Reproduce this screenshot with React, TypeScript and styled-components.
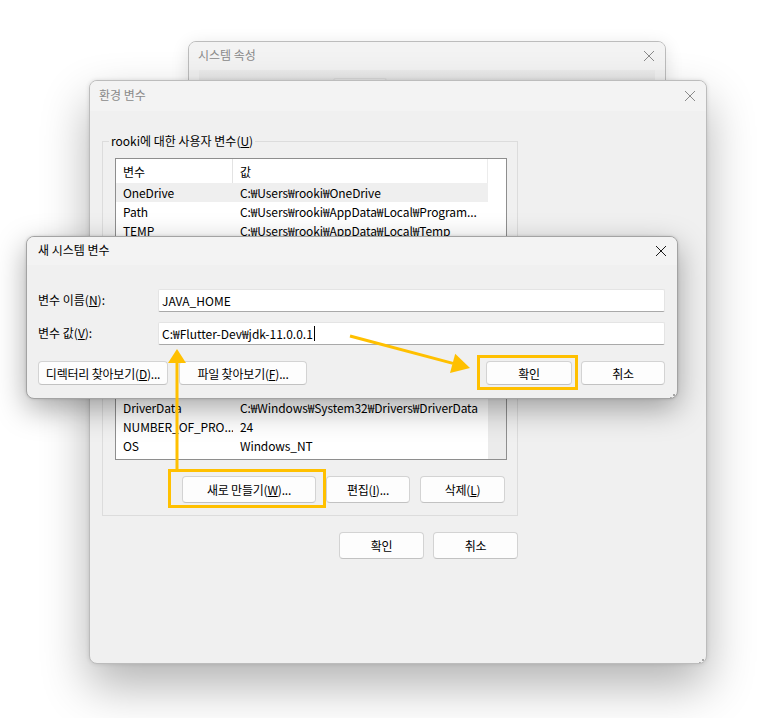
import styled, { createGlobalStyle } from "styled-components";

const GlobalStyle = createGlobalStyle`
  html, body {
    margin: 0;
    padding: 0;
    background: #ffffff;
  }
  body {
    font-family: "Noto Sans CJK KR", "Noto Sans", sans-serif;
    font-size: 12px;
    color: #000;
  }
`;

const Desktop = styled.div`
  position: relative;
  width: 778px;
  height: 718px;
  overflow: hidden;
  background: #fff;
`;

type Rect = { $x: number; $y: number; $w: number; $h: number };

const Window = styled.div<Rect & { $active?: boolean }>`
  position: absolute;
  left: ${(p) => p.$x}px;
  top: ${(p) => p.$y}px;
  width: ${(p) => p.$w}px;
  height: ${(p) => p.$h}px;
  box-sizing: border-box;
  display: flex;
  flex-direction: column;
  background: #f0f0f0;
  border: 1px solid ${(p) => (p.$active ? "#a3a3a3" : "#bcbcbc")};
  border-radius: 8px;
  overflow: hidden;
`;

const BackWindow = styled(Window)`
  box-shadow: 0 4px 18px rgba(0, 0, 0, 0.12);
`;

const EnvWindow = styled(Window)`
  box-shadow: 0 22px 48px rgba(0, 0, 0, 0.3), 0 0 4px rgba(0, 0, 0, 0.12);
`;

const DialogWindow = styled(Window)`
  box-shadow: 0 10px 30px rgba(0, 0, 0, 0.34), 0 0 3px rgba(0, 0, 0, 0.15);
`;

const TitleBar = styled.div<{ $active?: boolean; $h: number; $pl: number }>`
  flex: none;
  height: ${(p) => p.$h}px;
  box-sizing: border-box;
  display: flex;
  align-items: center;
  justify-content: space-between;
  padding: 0 10px 3px ${(p) => p.$pl}px;
  background: #f3f3f3;
  color: ${(p) => (p.$active ? "#000" : "#8a8a8a")};
  font-size: 12px;

  svg {
    margin-top: 3px;
  }
`;

const CloseIcon = ({ color }: { color: string }) => (
  <svg width="12" height="12" viewBox="0 0 12 12">
    <path d="M1 1 L11 11 M11 1 L1 11" stroke={color} strokeWidth="1" fill="none" />
  </svg>
);

const TabStrip = styled.div`
  flex: none;
  height: 12px;
  margin: 0 10px;
  background: linear-gradient(#ececec, #e4e4e4);
  display: flex;
  align-items: flex-end;
  padding-left: 134px;
`;

const Tab = styled.div`
  width: 52px;
  height: 3px;
  background: #e8e8e8;
  border: 1px solid #dadada;
  border-bottom: none;
  border-radius: 3px 3px 0 0;
`;

const EnvBody = styled.div`
  padding: 22px 12px 0 12px;
  display: flex;
  flex-direction: column;
  align-items: flex-start;
`;

const GroupBox = styled.fieldset<{ $mt?: number }>`
  margin: ${(p) => p.$mt ?? 0}px 0 0 0;
  width: 416px;
  box-sizing: border-box;
  padding: 9px 10px 12px 12px;
  border: 1px solid #dcdcdc;
  min-inline-size: 0;
`;

const Legend = styled.legend`
  margin-left: -6px;
  padding: 0 2px;
  line-height: 16px;
  font-size: 12px;
  color: #000;
`;

const ListView = styled.div<{ $h: number }>`
  height: ${(p) => p.$h}px;
  box-sizing: border-box;
  border: 1px solid #8e8e8e;
  background: #fff;
  display: flex;
  overflow: hidden;
`;

const Rows = styled.div`
  width: 372px;
  flex: none;
  display: flex;
  flex-direction: column;
`;

const Track = styled.div<{ $bg: string }>`
  flex: 1;
  background: ${(p) => p.$bg};
`;

const HeaderRow = styled.div`
  flex: none;
  height: 24px;
  display: grid;
  grid-template-columns: 117px 1fr;
  border-right: 1px solid #ececec;
`;

const HeaderCell = styled.div<{ $sep?: boolean }>`
  display: flex;
  align-items: center;
  padding-left: 7px;
  border-right: ${(p) => (p.$sep ? "1px solid #e3e3e3" : "none")};
`;

const Row = styled.div<{ $selected?: boolean }>`
  flex: none;
  height: 19px;
  display: grid;
  grid-template-columns: 117px 1fr;
  align-items: center;
  background: ${(p) => (p.$selected ? "#efefef" : "transparent")};
`;

const Cell = styled.div`
  padding: 0 4px 0 7px;
  white-space: nowrap;
  overflow: hidden;
  line-height: 19px;
  letter-spacing: -0.1px;
`;

const ButtonRow = styled.div<{ $mt: number; $gap: number }>`
  margin-top: ${(p) => p.$mt}px;
  display: flex;
  justify-content: flex-end;
  gap: ${(p) => p.$gap}px;
  padding-right: 2px;
`;

const Button = styled.div<{ $w: number; $h: number }>`
  width: ${(p) => p.$w}px;
  height: ${(p) => p.$h}px;
  box-sizing: border-box;
  display: flex;
  align-items: center;
  justify-content: center;
  background: #fdfdfd;
  border: 1px solid #d3d3d3;
  border-bottom-color: #c2c2c2;
  border-radius: 4px;
  font-size: 12px;
  color: #000;
  white-space: nowrap;
  letter-spacing: -0.2px;
`;

const Footer = styled.div`
  width: 416px;
  margin-top: 16px;
  display: flex;
  justify-content: flex-end;
  gap: 9px;
`;

const DialogBody = styled.div`
  padding: 24px 12px 13px 11px;
  display: flex;
  flex-direction: column;
`;

const FieldRow = styled.div<{ $mt: number }>`
  margin-top: ${(p) => p.$mt}px;
  display: flex;
  align-items: center;
`;

const FieldLabel = styled.div`
  width: 120px;
  flex: none;
  padding-bottom: 2px;
`;

const TextBox = styled.div`
  flex: 1;
  height: 23px;
  box-sizing: border-box;
  display: flex;
  align-items: center;
  padding: 0 0 1px 3px;
  background: #fff;
  border: 1px solid #e4e4e4;
  border-bottom-color: #a9a9a9;
  border-radius: 2px;
  white-space: nowrap;
`;

const Caret = styled.span`
  display: inline-block;
  width: 1px;
  height: 15px;
  margin-left: 1px;
  background: #000;
`;

const DialogButtons = styled.div`
  margin-top: 16px;
  display: flex;
  align-items: center;
`;

const ButtonGroup = styled.div<{ $gap: number }>`
  display: flex;
  gap: ${(p) => p.$gap}px;
`;

const Spacer = styled.div`
  flex: 1;
`;

const Grip = styled.div`
  position: absolute;
  right: 2px;
  bottom: 2px;
  width: 8px;
  height: 8px;
`;

const GripDots = () => (
  <Grip>
    <svg width="8" height="8" viewBox="0 0 8 8">
      {[
        [6, 0],
        [3, 3],
        [6, 3],
        [0, 6],
        [3, 6],
        [6, 6],
      ].map(([x, y]) => (
        <rect key={`${x}-${y}`} x={x} y={y} width="2" height="2" fill="#a6a6a6" />
      ))}
    </svg>
  </Grip>
);

const Highlight = styled.div<Rect>`
  position: absolute;
  left: ${(p) => p.$x}px;
  top: ${(p) => p.$y}px;
  width: ${(p) => p.$w}px;
  height: ${(p) => p.$h}px;
  box-sizing: border-box;
  border: 3px solid #ffc000;
  pointer-events: none;
`;

const Overlay = styled.svg`
  position: absolute;
  left: 0;
  top: 0;
  pointer-events: none;
`;

const userVars = [
  { name: "OneDrive", value: "C:₩Users₩rooki₩OneDrive", selected: true },
  { name: "Path", value: "C:₩Users₩rooki₩AppData₩Local₩Program..." },
  { name: "TEMP", value: "C:₩Users₩rooki₩AppData₩Local₩Temp" },
  { name: "TMP", value: "C:₩Users₩rooki₩AppData₩Local₩Temp" },
];

const systemVars = [
  { name: "ChocolateyInstall", value: "C:₩ProgramData₩chocolatey" },
  { name: "ComSpec", value: "C:₩Windows₩system32₩cmd.exe" },
  { name: "DriverData", value: "C:₩Windows₩System32₩Drivers₩DriverData" },
  { name: "NUMBER_OF_PRO...", value: "24" },
  { name: "OS", value: "Windows_NT" },
  { name: "Path", value: "C:₩Program Files₩Common Files₩Oracle₩Java₩javapath;C:₩Windows" },
];

type Var = { name: string; value: string; selected?: boolean };

function VarList({ items, height, track }: { items: Var[]; height: number; track: string }) {
  return (
    <ListView $h={height}>
      <Rows>
        <HeaderRow>
          <HeaderCell $sep>변수</HeaderCell>
          <HeaderCell>값</HeaderCell>
        </HeaderRow>
        {items.map((v) => (
          <Row key={v.name} $selected={v.selected}>
            <Cell>{v.name}</Cell>
            <Cell>{v.value}</Cell>
          </Row>
        ))}
      </Rows>
      <Track $bg={track} />
    </ListView>
  );
}

export default function App() {
  return (
    <>
      <GlobalStyle />
      <Desktop>
        <BackWindow $x={188} $y={41} $w={478} $h={220}>
          <TitleBar $h={28} $pl={9}>
            <span>시스템 속성</span>
            <CloseIcon color="#8a8a8a" />
          </TitleBar>
          <TabStrip>
            <Tab />
          </TabStrip>
        </BackWindow>

        <EnvWindow $x={89} $y={80} $w={618} $h={584}>
          <TitleBar $h={30} $pl={9}>
            <span>환경 변수</span>
            <CloseIcon color="#8a8a8a" />
          </TitleBar>
          <EnvBody>
            <GroupBox>
              <Legend>
                rooki에 대한 사용자 변수(<u>U</u>)
              </Legend>
              <VarList items={userVars} height={90} track="#fff" />
              <ButtonRow $mt={12} $gap={10}>
                <Button $w={134} $h={27}>새로 만들기(N)...</Button>
                <Button $w={84} $h={27}>편집(E)...</Button>
                <Button $w={85} $h={27}>삭제(D)</Button>
              </ButtonRow>
            </GroupBox>
            <GroupBox $mt={10}>
              <Legend>
                시스템 변수(<u>S</u>)
              </Legend>
              <VarList items={systemVars} height={125} track="#ebebeb" />
              <ButtonRow $mt={16} $gap={10}>
                <Button $w={134} $h={27}>
                  새로 만들기(<u>W</u>)...
                </Button>
                <Button $w={84} $h={27}>
                  편집(<u>I</u>)...
                </Button>
                <Button $w={85} $h={27}>
                  삭제(<u>L</u>)
                </Button>
              </ButtonRow>
            </GroupBox>
            <Footer>
              <Button $w={85} $h={27}>확인</Button>
              <Button $w={85} $h={27}>취소</Button>
            </Footer>
          </EnvBody>
          <GripDots />
        </EnvWindow>

        <DialogWindow $x={26} $y={236} $w={652} $h={163} $active>
          <TitleBar $h={28} $pl={11} $active>
            <span>새 시스템 변수</span>
            <CloseIcon color="#1a1a1a" />
          </TitleBar>
          <DialogBody>
            <FieldRow $mt={0}>
              <FieldLabel>
                변수 이름(<u>N</u>):
              </FieldLabel>
              <TextBox>JAVA_HOME</TextBox>
            </FieldRow>
            <FieldRow $mt={10}>
              <FieldLabel>
                변수 값(<u>V</u>):
              </FieldLabel>
              <TextBox>
                C:₩Flutter-Dev₩jdk-11.0.0.1
                <Caret />
              </TextBox>
            </FieldRow>
            <DialogButtons>
              <ButtonGroup $gap={11}>
                <Button $w={130} $h={24}>
                  디렉터리 찾아보기(<u>D</u>)...
                </Button>
                <Button $w={128} $h={24}>
                  파일 찾아보기(<u>F</u>)...
                </Button>
              </ButtonGroup>
              <Spacer />
              <ButtonGroup $gap={9}>
                <Button $w={86} $h={24}>확인</Button>
                <Button $w={84} $h={24}>취소</Button>
              </ButtonGroup>
            </DialogButtons>
          </DialogBody>
          <GripDots />
        </DialogWindow>

        <Highlight $x={168} $y={469} $w={158} $h={39} />
        <Highlight $x={477} $y={355} $w={101} $h={35} />

        <Overlay width={778} height={718} viewBox="0 0 778 718">
          <line x1="177" y1="470" x2="177" y2="361" stroke="#ffc000" strokeWidth="3" />
          <polygon points="177,349 168,363 186,363" fill="#ffc000" />
          <line x1="350" y1="336" x2="453" y2="363.4" stroke="#ffc000" strokeWidth="3" />
          <polygon points="470,368 450,373 455.2,353.7" fill="#ffc000" />
        </Overlay>
      </Desktop>
    </>
  );
}
